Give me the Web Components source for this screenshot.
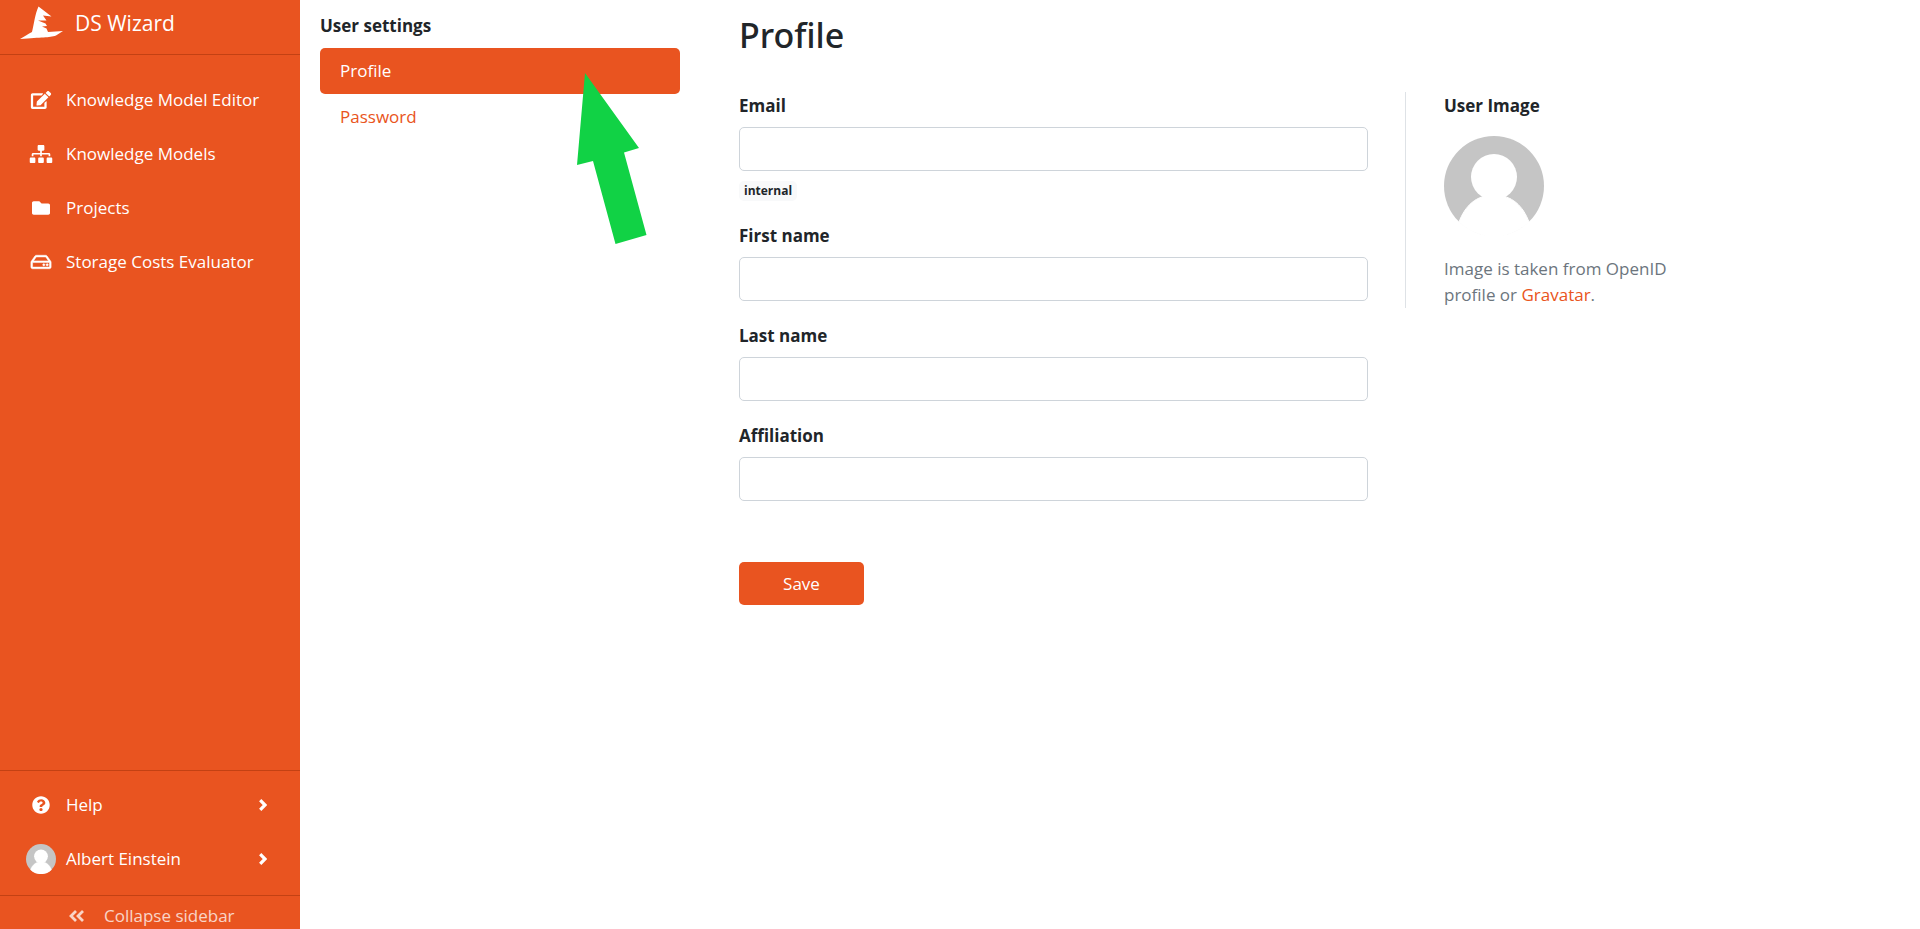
<!DOCTYPE html>
<html lang="en">
<head>
<meta charset="utf-8">
<title>DS Wizard</title>
<style>
    body {
        margin: 0;
        font-family: "Open Sans", "Noto Sans", sans-serif;
        font-size: 17px;
        line-height: 26px;
        color: #212529;
        background: #fff;
        --primary: #e95420;
        --primary-dark: #c34113;
    }
</style>
</head>
<body>
<wizard-app>
    <wizard-sidebar slot="sidebar">
        <nav-item icon="edit">Knowledge Model Editor</nav-item>
        <nav-item icon="sitemap">Knowledge Models</nav-item>
        <nav-item icon="folder">Projects</nav-item>
        <nav-item icon="hdd">Storage Costs Evaluator</nav-item>
        <nav-item slot="bottom" icon="question" more>Help</nav-item>
        <nav-item slot="bottom" icon="avatar" more>Albert Einstein</nav-item>
    </wizard-sidebar>
    <settings-nav slot="nav"></settings-nav>
    <profile-page></profile-page>
</wizard-app>
<pointer-arrow></pointer-arrow>

<script>
const icons = {
    edit: ["0 0 576 512", '<path d="M402.6 83.2l90.2 90.2c3.8 3.8 3.8 10 0 13.8L274.4 405.6l-92.8 10.3c-12.4 1.4-22.9-9.1-21.5-21.5l10.3-92.8L388.8 83.2c3.8-3.8 10-3.8 13.8 0zm162-22.9l-48.8-48.8c-15.2-15.2-39.9-15.2-55.2 0l-35.4 35.4c-3.8 3.8-3.8 10 0 13.8l90.2 90.2c3.8 3.8 10 3.8 13.8 0l35.4-35.4c15.2-15.3 15.2-40 0-55.2zM384 346.2V448H64V128h229.8c3.2 0 6.2-1.3 8.5-3.5l40-40c7.6-7.6 2.2-20.5-8.5-20.5H48C21.5 64 0 85.5 0 112v352c0 26.5 21.5 48 48 48h352c26.5 0 48-21.5 48-48V306.2c0-10.7-12.9-16-20.5-8.5l-40 40c-2.2 2.3-3.5 5.3-3.5 8.5z"/>'],
    sitemap: ["0 0 640 512", '<path d="M128 352H32c-17.67 0-32 14.33-32 32v96c0 17.67 14.33 32 32 32h96c17.67 0 32-14.33 32-32v-96c0-17.67-14.33-32-32-32zm-24-80h192v48h48v-48h192v48h48v-57.59c0-21.17-17.23-38.41-38.41-38.41H344v-64h40c17.67 0 32-14.33 32-32V32c0-17.67-14.33-32-32-32H256c-17.67 0-32 14.33-32 32v96c0 17.67 14.33 32 32 32h40v64H94.41C73.23 224 56 241.23 56 262.41V320h48v-48zm264 80h-96c-17.67 0-32 14.33-32 32v96c0 17.67 14.33 32 32 32h96c17.67 0 32-14.33 32-32v-96c0-17.67-14.33-32-32-32zm240 0h-96c-17.67 0-32 14.33-32 32v96c0 17.67 14.33 32 32 32h96c17.67 0 32-14.33 32-32v-96c0-17.67-14.33-32-32-32z"/>'],
    folder: ["0 0 512 512", '<path d="M464 128H272l-64-64H48C21.49 64 0 85.49 0 112v288c0 26.51 21.49 48 48 48h416c26.51 0 48-21.49 48-48V176c0-26.51-21.49-48-48-48z"/>'],
    hdd: ["0 0 576 512", '<path d="M567.403 235.642L462.323 84.589A48 48 0 0 0 422.919 64H153.081a48 48 0 0 0-39.404 20.589L8.597 235.642A48.001 48.001 0 0 0 0 263.054V400c0 26.51 21.49 48 48 48h480c26.51 0 48-21.49 48-48V263.054c0-9.801-3-19.366-8.597-27.412zM153.081 112h269.838l77.913 112H75.168l77.913-112zM528 400H48V272h480v128zm-32-64c0 17.673-14.327 32-32 32s-32-14.327-32-32 14.327-32 32-32 32 14.327 32 32zm-96 0c0 17.673-14.327 32-32 32s-32-14.327-32-32 14.327-32 32-32 32 14.327 32 32z" stroke="currentColor" stroke-width="14"/>'],
    question: ["0 0 512 512", '<path d="M504 256c0 136.997-111.043 248-248 248S8 392.997 8 256C8 119.083 119.043 8 256 8s248 111.083 248 248zM262.655 90c-54.497 0-89.255 22.957-116.549 63.758-3.536 5.286-2.353 12.415 2.715 16.258l34.699 26.31c5.205 3.947 12.621 3.008 16.665-2.122 17.864-22.658 30.113-35.797 57.303-35.797 20.429 0 45.698 13.148 45.698 32.958 0 14.976-12.363 22.667-32.534 33.976C247.128 238.528 216 254.941 216 296v4c0 6.627 5.373 12 12 12h56c6.627 0 12-5.373 12-12v-1.333c0-28.462 83.186-29.647 83.186-106.667 0-58.002-60.165-102-116.531-102zM256 338c-25.365 0-46 20.635-46 46 0 25.364 20.635 46 46 46s46-20.636 46-46c0-25.365-20.635-46-46-46z"/>'],
    chevron: ["0 0 8 12", '<path d="M1.200 1.200L6 6l-4.800 4.800" fill="none" stroke="currentColor" stroke-width="3.200"/>'],
    collapse: ["0 0 15 12", '<path d="M7 1L2 6l5 5M14 1L9 6l5 5" fill="none" stroke="currentColor" stroke-width="2.800"/>'],
    avatar: ["0 0 100 100", '<circle cx="50" cy="50" r="50" fill="#c5c5c5"/><circle cx="50" cy="41" r="23" fill="#fff"/><path d="M15 86C21 70 32 59 50 59s29 11 35 27A50 50 0 0 1 15 86z" fill="#fff" stroke="#fff"/>'],
    hat: ["0 0 44 34", '<path d="M18.500.5L31.500 10.500 23 9.500 26.500 14.500 18 14.500 25.500 17.500 27 20 22 20.500 26.500 22.500 28 26 43 25 36 29.500C29 32 22 31 0 33 5 30 8 28 12 26 14 18 15 8 18.500.5z"/>']
}

class SvgIcon extends HTMLElement {
    constructor() {
        super()
        const [box, shape] = icons[this.getAttribute("name")]
        this.attachShadow({ mode: "open" }).innerHTML = `
        <style>
        :host {
            display: block;
            flex: none;
        }

        svg {
            display: block;
            width: 100%;
            height: 100%;
            fill: currentColor;
        }
        </style>
        <svg viewBox="${box}" aria-hidden="true">${shape}</svg>
        `
    }
}

class NavItem extends HTMLElement {
    constructor() {
        super()
        const icon = this.getAttribute("icon")
        const more = this.hasAttribute("more") ? '<svg-icon class="more" name="chevron"></svg-icon>' : ""
        this.attachShadow({ mode: "open" }).innerHTML = `
        <style>
        :host {
            display: block;
        }

        a {
            display: flex;
            align-items: center;
            height: 54px;
            padding: 0 33px 0 26px;
            color: #fff;
            text-decoration: none;
        }

        .icon {
            display: flex;
            justify-content: center;
            width: 30px;
            margin-right: 10px;
        }

        .icon svg-icon {
            width: 24px;
            height: 18px;
        }

        .icon svg-icon[name="avatar"] {
            width: 30px;
            height: 30px;
        }

        .more {
            width: 8px;
            height: 12px;
            margin-left: auto;
        }
        </style>
        <a href="#"><span class="icon"><svg-icon name="${icon}"></svg-icon></span><slot></slot>${more}</a>
        `
    }
}

class WizardSidebar extends HTMLElement {
    constructor() {
        super()
        this.attachShadow({ mode: "open" }).innerHTML = `
        <style>
        :host {
            display: flex;
            flex-direction: column;
            color: #fff;
            background: var(--primary);
        }

        .brand {
            display: flex;
            align-items: center;
            gap: 11px;
            height: 46px;
            padding: 0 20px 8px;
            border-bottom: 1px solid var(--primary-dark);
            font-size: 21px;
            color: #fff;
            text-decoration: none;
        }

        .brand svg-icon {
            width: 44px;
            height: 34px;
        }

        nav {
            flex: 1;
            padding-top: 18px;
        }

        .bottom {
            padding: 7px 0 9px;
            border-top: 1px solid var(--primary-dark);
            border-bottom: 1px solid var(--primary-dark);
        }

        button {
            display: flex;
            align-items: center;
            gap: 20px;
            padding: 7px 0 0 69px;
            border: 0;
            background: none;
            font: inherit;
            color: #fff;
            opacity: .75;
        }

        button svg-icon {
            width: 15px;
            height: 12px;
        }
        </style>
        <a class="brand" href="#"><svg-icon name="hat"></svg-icon>DS Wizard</a>
        <nav><slot></slot></nav>
        <div class="bottom"><slot name="bottom"></slot></div>
        <button type="button"><svg-icon name="collapse"></svg-icon>Collapse sidebar</button>
        `
    }
}

class SettingsNav extends HTMLElement {
    constructor() {
        super()
        this.attachShadow({ mode: "open" }).innerHTML = `
        <style>
        :host {
            display: block;
            padding-top: 13px;
        }

        strong {
            display: block;
            margin-bottom: 9px;
        }

        a {
            display: block;
            padding: 10px 20px;
            border-radius: 5px;
            color: var(--primary);
            text-decoration: none;
        }

        a.active {
            color: #fff;
            background: var(--primary);
        }
        </style>
        <strong>User settings</strong>
        <nav>
            <a class="active" href="#">Profile</a>
            <a href="#">Password</a>
        </nav>
        `
    }
}

class FormField extends HTMLElement {
    constructor() {
        super()
        this.attachShadow({ mode: "open" }).innerHTML = `
        <style>
        :host {
            display: block;
            margin-bottom: 21px;
        }

        label {
            display: block;
            padding-top: 1px;
            margin-bottom: 8px;
            font-weight: 700;
        }

        input {
            display: block;
            box-sizing: border-box;
            width: 100%;
            height: 44px;
            padding: 8px 14px;
            border: 1px solid #ced4da;
            border-radius: 5px;
            background: #fff;
            font: inherit;
        }

        ::slotted(*) {
            display: block;
            width: fit-content;
            margin-top: 10px;
            padding: 0 5px;
            border-radius: 5px;
            background: #f8f9fa;
            font-size: 12px;
            font-weight: 700;
            line-height: 20px;
        }
        </style>
        <label for="field">${this.getAttribute("label")}</label>
        <input id="field" type="${this.getAttribute("type") || "text"}">
        <slot></slot>
        `
    }
}

class UserImage extends HTMLElement {
    constructor() {
        super()
        this.attachShadow({ mode: "open" }).innerHTML = `
        <style>
        :host {
            display: block;
            padding: 1px 0 0 38px;
            border-left: 1px solid #dee2e6;
        }

        strong {
            display: block;
            margin-bottom: 17px;
        }

        svg-icon {
            width: 100px;
            height: 100px;
        }

        p {
            max-width: 228px;
            margin: 20px 0 0;
            color: #6c757d;
        }

        a {
            color: var(--primary);
            text-decoration: none;
        }
        </style>
        <strong>User Image</strong>
        <svg-icon name="avatar"></svg-icon>
        <p>Image is taken from OpenID profile or <a href="#">Gravatar</a>.</p>
        `
    }
}

class ProfilePage extends HTMLElement {
    constructor() {
        super()
        this.attachShadow({ mode: "open" }).innerHTML = `
        <style>
        :host {
            display: block;
            padding-top: 12px;
        }

        h2 {
            margin: 0 0 34px;
            font-family: "Noto Sans", "Open Sans", sans-serif;
            font-size: 34px;
            font-weight: 500;
            line-height: 46px;
        }

        .columns {
            display: grid;
            grid-template-columns: minmax(0, 1fr) 296px;
            align-items: start;
            gap: 37px;
        }

        button {
            width: 125px;
            height: 43px;
            margin-top: 40px;
            border: 0;
            border-radius: 5px;
            background: var(--primary);
            font: inherit;
            color: #fff;
        }
        </style>
        <h2>Profile</h2>
        <div class="columns">
            <form>
                <form-field label="Email" type="email"><span>internal</span></form-field>
                <form-field label="First name"></form-field>
                <form-field label="Last name"></form-field>
                <form-field label="Affiliation"></form-field>
                <button type="button">Save</button>
            </form>
            <user-image></user-image>
        </div>
        `
    }
}

class WizardApp extends HTMLElement {
    constructor() {
        super()
        this.attachShadow({ mode: "open" }).innerHTML = `
        <style>
        :host {
            display: grid;
            grid-template-columns: 300px minmax(0, 1fr);
            min-height: 100vh;
        }

        main {
            display: grid;
            grid-template-columns: 360px minmax(0, 1fr);
            align-items: start;
            gap: 59px;
            max-width: 1381px;
            padding: 0 20px;
        }
        </style>
        <slot name="sidebar"></slot>
        <main><slot name="nav"></slot><slot></slot></main>
        `
    }
}

// lies over the page, pointing at the active settings link
class PointerArrow extends HTMLElement {
    constructor() {
        super()
        this.attachShadow({ mode: "open" }).innerHTML = `
        <style>
        :host {
            position: absolute;
            top: 73px;
            left: 577px;
            width: 70px;
            height: 171px;
            pointer-events: none;
        }

        svg {
            display: block;
        }
        </style>
        <svg width="70" height="171" aria-hidden="true"><path d="M8 0L62 75 47 79.500 69.500 162 38.500 171 16 88 0 92z" fill="#11d245"/></svg>
        `
    }
}

customElements.define("svg-icon", SvgIcon)
customElements.define("nav-item", NavItem)
customElements.define("wizard-sidebar", WizardSidebar)
customElements.define("settings-nav", SettingsNav)
customElements.define("form-field", FormField)
customElements.define("user-image", UserImage)
customElements.define("profile-page", ProfilePage)
customElements.define("wizard-app", WizardApp)
customElements.define("pointer-arrow", PointerArrow)
</script>
</body>
</html>
